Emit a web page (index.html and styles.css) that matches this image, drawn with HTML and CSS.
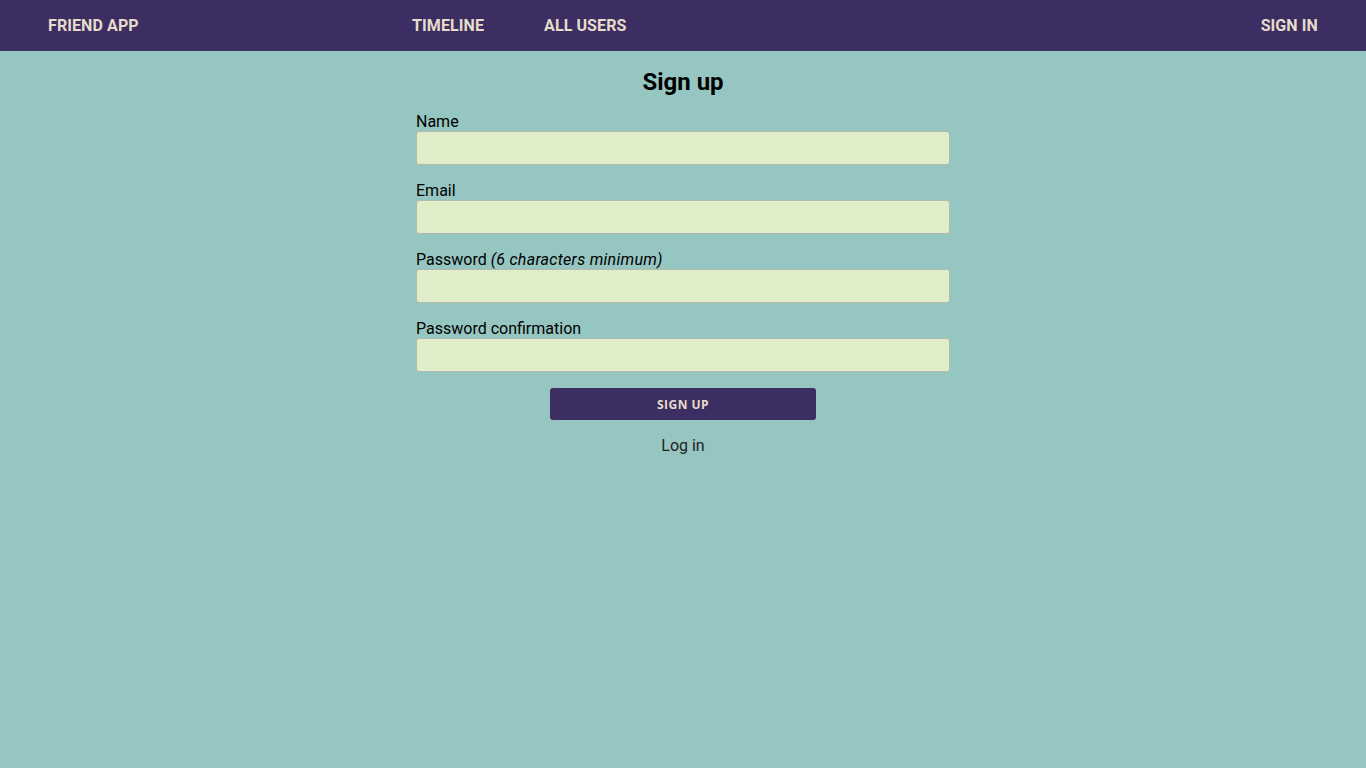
FILE: index.html
```html
<!DOCTYPE html>
<html lang="en">
<head>
<meta charset="utf-8">
<title>Friend App - Sign up</title>
<link rel="stylesheet" href="styles.css">
</head>
<body>
<header class="navbar">
  <a class="brand" href="#">Friend App</a>
  <nav class="nav-links">
    <a href="#">Timeline</a>
    <a href="#">All Users</a>
  </nav>
  <a class="nav-right" href="#">Sign in</a>
</header>
<main class="content">
  <h2 class="title">Sign up</h2>
  <form class="signup-form">
    <div class="field">
      <label for="name">Name</label>
      <input id="name" type="text">
    </div>
    <div class="field">
      <label for="email">Email</label>
      <input id="email" type="email">
    </div>
    <div class="field">
      <label for="password">Password <em>(6 characters minimum)</em></label>
      <input id="password" type="password">
    </div>
    <div class="field">
      <label for="password_confirmation">Password confirmation</label>
      <input id="password_confirmation" type="password">
    </div>
    <div class="actions">
      <button type="submit" class="btn">Sign up</button>
    </div>
  </form>
  <div class="links">
    <a href="#">Log in</a>
  </div>
</main>
</body>
</html>
```
FILE: styles.css
```css
* { box-sizing: border-box; }
html, body {
  margin: 0;
  padding: 0;
}
body {
  background: #96c6c1;
  font-family: Roboto, "Liberation Sans", sans-serif;
  font-size: 16px;
  color: #000;
  min-height: 100vh;
}
a { text-decoration: none; }

.navbar {
  height: 51px;
  background: #3c2e63;
  display: flex;
  align-items: center;
  padding: 0 48px;
}
.navbar a {
  color: #e6dcc9;
  font-weight: 700;
  font-size: 16px;
  text-transform: uppercase;
  line-height: 19px;
  letter-spacing: 0.1px;
}
.brand {
  flex: 0 0 364px;
}
.nav-links {
  display: flex;
  gap: 60px;
}
.nav-right {
  margin-left: auto;
}

.content {
  width: 534px;
  margin: 0 auto;
  padding-top: 17px;
}
.title {
  margin: 0 0 16px;
  text-align: center;
  font-size: 24px;
  line-height: 28px;
  font-weight: 700;
}
.field {
  display: flex;
  flex-direction: column;
  margin-bottom: 16px;
}
.field label {
  line-height: 19px;
  font-size: 16px;
}
.field label em {
  font-style: italic;
  letter-spacing: 0.28px;
}
.field input {
  height: 34px;
  width: 100%;
  background: #dfedc8;
  border: 1px solid #b5b8ad;
  border-radius: 3px;
  font-family: inherit;
  font-size: 16px;
  padding: 4px 8px;
}
.actions {
  display: flex;
  justify-content: center;
}
.btn {
  width: 266px;
  height: 32px;
  background: #3c2e63;
  color: #e6dcc9;
  border: none;
  border-radius: 3px;
  font-family: "Open Sans", sans-serif;
  font-weight: 700;
  font-size: 12px;
  text-transform: uppercase;
  letter-spacing: 0.5px;
  cursor: pointer;
}
.links {
  text-align: center;
  margin-top: 16px;
}
.links a {
  color: #222;
  font-size: 16px;
  line-height: 19px;
}
```
